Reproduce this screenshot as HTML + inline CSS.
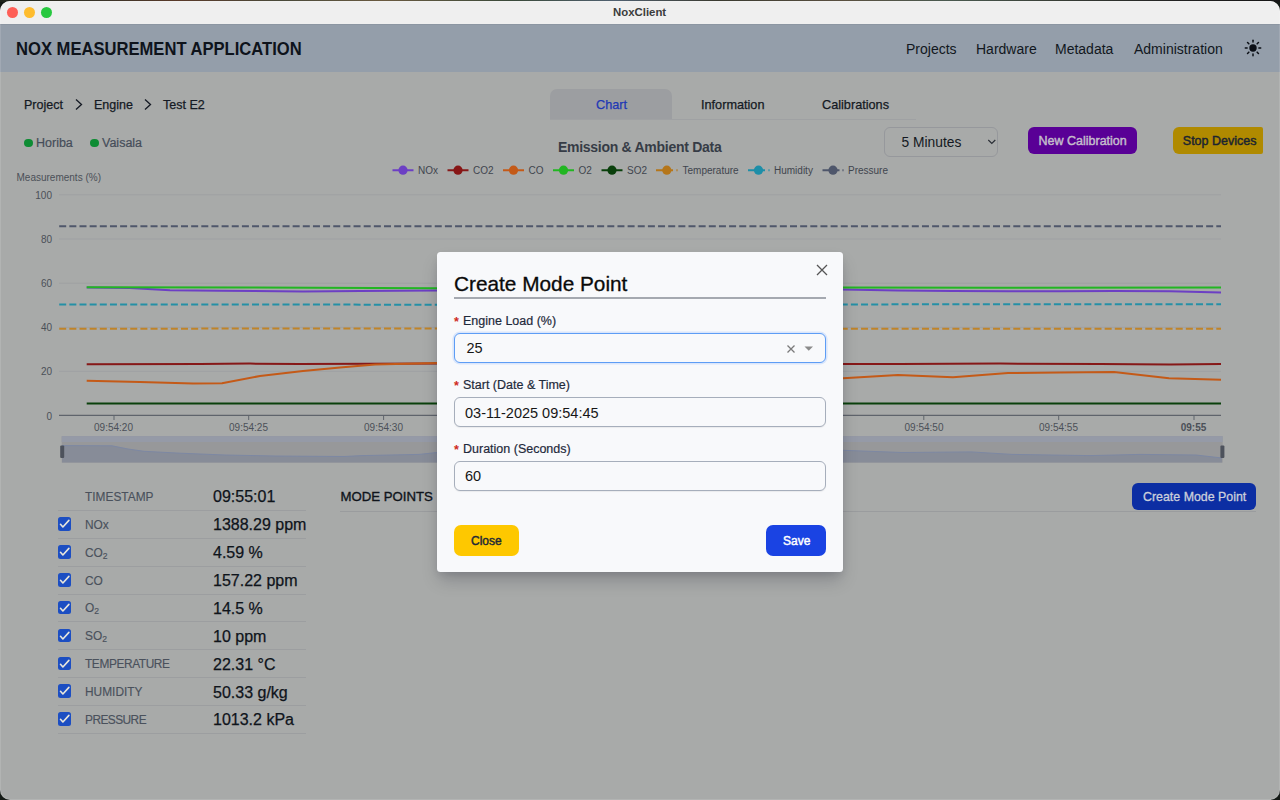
<!DOCTYPE html>
<html><head><meta charset="utf-8">
<style>
*{box-sizing:border-box;margin:0;padding:0}
html,body{width:1280px;height:800px;overflow:hidden;background:#141a16;font-family:"Liberation Sans",sans-serif}
.a{position:absolute;white-space:nowrap;line-height:1}
#win{position:absolute;left:0;top:1px;width:1280px;height:799px;border-radius:10px;overflow:hidden;background:#a8aaa9}
#wb{position:absolute;left:0;top:1px;width:1280px;height:799px;border-radius:10px;box-shadow:inset 0 0 0 1px rgba(255,255,255,0.12);pointer-events:none}
#tb{position:absolute;left:0;top:0;width:1280px;height:23px;background:#efefef}
.tl{position:absolute;top:6px;width:11px;height:11px;border-radius:50%}
#hdr{position:absolute;left:0;top:23px;width:1280px;height:48px;background:#949eaa}
.nav{font-size:14px;color:#111720;top:17.8px}
.bc{font-size:12.5px;color:#151a24;-webkit-text-stroke:0.25px #151a24}
.tab{font-size:12.7px;color:#141922;-webkit-text-stroke:0.25px #141922}
.lg{font-size:10px;color:#3f454e}
.yl{font-size:10px;color:#4b5058;text-align:right;width:30px}
.xl{font-size:10px;color:#4b5058;width:60px;text-align:center}
.tlab{font-size:11.9px;color:#4a515c;left:85px;-webkit-text-stroke:0.15px #4a515c}
.sub{font-size:0.72em;vertical-align:-0.25em}
.tval{font-size:16px;color:#0f141b;left:213px;-webkit-text-stroke:0.25px #0f141b}
.div{position:absolute;left:58px;width:248px;height:1px;background:#9c9ea0}
.cb{position:absolute;left:58px;width:13.2px;height:13.5px;border-radius:2.5px;background:#1c4ec2}
.cb svg{position:absolute;left:0;top:0}
#modal{position:absolute;left:437px;top:251px;width:406px;height:320.3px;background:#f8f9fb;border-radius:3.5px;box-shadow:0 10px 18px -2px rgba(10,10,30,0.2),0 4px 8px -2px rgba(10,10,30,0.12)}
.ml{font-size:12.5px;color:#1f2a3b;-webkit-text-stroke:0.2px #1f2a3b}
.req{color:#cf2a1f;font-size:12.5px;font-weight:700}
.inp{position:absolute;left:17px;width:372px;height:30px;border:1.25px solid #a6aebb;border-radius:6px;background:#f8f9fb;box-shadow:0 1px 1px rgba(0,0,0,0.06)}
.iv{font-size:14.5px;color:#161616}
</style></head><body>
<div class="a" style="left:0;top:0;width:1280px;height:2px;background:linear-gradient(90deg,#1e241c 0%,#3a3428 8%,#5a3a2a 14%,#4a4a3a 22%,#6a5a40 30%,#3a4a3a 40%,#506070 48%,#3a3a30 56%,#5a5040 66%,#4a5a50 74%,#3a4038 82%,#222 92%,#151515 100%)"></div>
<div id="win">
  <div id="tb">
    <div class="tl" style="left:6.5px;background:#fe5f57"></div>
    <div class="tl" style="left:23.5px;background:#febc2e"></div>
    <div class="tl" style="left:40.5px;background:#28c840"></div>
    <div class="a" style="left:613px;top:5.8px;font-size:11.4px;font-weight:700;color:#3c3c3c">NoxClient</div>
  </div>
  <div id="hdr"><div class="a" style="left:0;top:0;width:1280px;height:1px;background:#8c96a2"></div>
    <div class="a" style="left:15.8px;top:17.2px;font-size:17.5px;transform:scaleX(0.948);transform-origin:0 0;font-weight:700;color:#0e131b">NOX MEASUREMENT APPLICATION</div>
    <div class="a nav" style="left:906px">Projects</div>
    <div class="a nav" style="left:976px">Hardware</div>
    <div class="a nav" style="left:1055px">Metadata</div>
    <div class="a nav" style="left:1134px">Administration</div>
    <svg class="a" style="left:1243.7px;top:15.4px" width="18" height="18" viewBox="0 0 18 18">
      <circle cx="9" cy="9" r="3.7" fill="#0b0f16"/>
      <g stroke="#0b0f16" stroke-width="1.5" stroke-linecap="round"><line x1="14.90" y1="9.00" x2="16.70" y2="9.00"/><line x1="13.17" y1="13.17" x2="14.44" y2="14.44"/><line x1="9.00" y1="14.90" x2="9.00" y2="16.70"/><line x1="4.83" y1="13.17" x2="3.56" y2="14.44"/><line x1="3.10" y1="9.00" x2="1.30" y2="9.00"/><line x1="4.83" y1="4.83" x2="3.56" y2="3.56"/><line x1="9.00" y1="3.10" x2="9.00" y2="1.30"/><line x1="13.17" y1="4.83" x2="14.44" y2="3.56"/></g>
    </svg>
  </div>
  <!-- content coordinates: page y = win y + 1 -->
  <div style="position:absolute;left:0;top:-1px;width:1280px;height:800px">
    <!-- breadcrumb -->
    <div class="a bc" style="left:24px;top:98.5px">Project</div>
    <svg class="a" style="left:74px;top:98px" width="10" height="13"><path d="M2 1.5 L7.5 6.5 L2 11.5" fill="none" stroke="#151a24" stroke-width="1.3"/></svg>
    <div class="a bc" style="left:94px;top:98.5px">Engine</div>
    <svg class="a" style="left:143px;top:98px" width="10" height="13"><path d="M2 1.5 L7.5 6.5 L2 11.5" fill="none" stroke="#151a24" stroke-width="1.3"/></svg>
    <div class="a bc" style="left:163px;top:98.5px">Test E2</div>
    <!-- status -->
    <div class="a" style="left:24.2px;top:138.6px;width:8.6px;height:8.6px;border-radius:50%;background:#0e8c34"></div>
    <div class="a" style="left:36px;top:137px;font-size:12.5px;color:#454d59;-webkit-text-stroke:0.2px #454d59">Horiba</div>
    <div class="a" style="left:90.2px;top:138.6px;width:8.6px;height:8.6px;border-radius:50%;background:#0e8c34"></div>
    <div class="a" style="left:102px;top:137px;font-size:12.5px;color:#454d59;-webkit-text-stroke:0.2px #454d59">Vaisala</div>
    <!-- tabs -->
    <div class="a" style="left:550px;top:89px;width:122px;height:31px;background:#9c9ea1;border-radius:7px 7px 0 0"></div>
    <div class="a" style="left:550px;top:119px;width:366px;height:1px;background:#9fa1a3"></div>
    <div class="a tab" style="left:596px;top:99px;color:#1f38b5;-webkit-text-stroke:0.25px #1f38b5">Chart</div>
    <div class="a tab" style="left:701px;top:99px">Information</div>
    <div class="a tab" style="left:822px;top:99px">Calibrations</div>
    <!-- chart title -->
    <div class="a" style="left:558px;top:139.5px;font-size:14px;letter-spacing:-0.28px;font-weight:700;color:#363c46">Emission &amp; Ambient Data</div>
    <!-- select -->
    <div class="a" style="left:884px;top:127px;width:114px;height:30px;border:1px solid #96989c;border-radius:6px"></div>
    <div class="a" style="left:901.5px;top:136.3px;font-size:13.8px;color:#141922">5 Minutes</div>
    <svg class="a" style="left:987px;top:137.5px" width="10" height="8"><path d="M1.3 2 L4.8 5.5 L8.3 2" fill="none" stroke="#2a2f36" stroke-width="1.2"/></svg>
    <!-- buttons -->
    <div class="a" style="left:1028px;top:127px;width:109px;height:27px;background:#590096;border-radius:6px"></div>
    <div class="a" style="left:1038.5px;top:135.4px;font-size:12.5px;color:#c4bdcb;-webkit-text-stroke:0.45px #c4bdcb">New Calibration</div>
    <div class="a" style="left:1173px;top:127px;width:90px;height:27px;background:#b08a00;border-radius:6px 2px 2px 6px"></div>
    <div class="a" style="left:1182.8px;top:135.2px;font-size:12.5px;color:#1b2430;-webkit-text-stroke:0.45px #1b2430">Stop Devices</div>
    <!-- chart labels -->
    <div class="a" style="left:16.5px;top:173px;font-size:10px;color:#4b5058">Measurements (%)</div>
    <div class="a yl" style="left:22px;top:191px">100</div>
    <div class="a yl" style="left:22px;top:235px">80</div>
    <div class="a yl" style="left:22px;top:279px">60</div>
    <div class="a yl" style="left:22px;top:323px">40</div>
    <div class="a yl" style="left:22px;top:367px">20</div>
    <div class="a yl" style="left:22px;top:412px">0</div>
    <div class="a xl" style="left:83.5px;top:422.7px">09:54:20</div>
    <div class="a xl" style="left:218.5px;top:422.7px">09:54:25</div>
    <div class="a xl" style="left:353.5px;top:422.7px">09:54:30</div>
    <div class="a xl" style="left:894px;top:422.7px">09:54:50</div>
    <div class="a xl" style="left:1028.5px;top:422.7px">09:54:55</div>
    <div class="a xl" style="left:1163.5px;top:422.7px;font-weight:700">09:55</div>
    <!-- legend -->
    <div class="a lg" style="left:418px;top:166px">NOx</div>
    <div class="a lg" style="left:473px;top:166px">CO2</div>
    <div class="a lg" style="left:528.5px;top:166px">CO</div>
    <div class="a lg" style="left:578.5px;top:166px">O2</div>
    <div class="a lg" style="left:627px;top:166px">SO2</div>
    <div class="a lg" style="left:682.5px;top:166px">Temperature</div>
    <div class="a lg" style="left:774px;top:166px">Humidity</div>
    <div class="a lg" style="left:848px;top:166px">Pressure</div>
    <svg class="a" style="left:0;top:0" width="1280" height="800">
      <!-- legend icons -->
      <g stroke-width="2">
        <line x1="392.5" y1="170.2" x2="413.5" y2="170.2" stroke="#6c3fc4"/><circle cx="403" cy="170.2" r="4.6" fill="#6c3fc4"/>
        <line x1="447.5" y1="170.2" x2="468.5" y2="170.2" stroke="#861818"/><circle cx="458" cy="170.2" r="4.6" fill="#871616"/>
        <line x1="503" y1="170.2" x2="524" y2="170.2" stroke="#c45a18"/><circle cx="513.5" cy="170.2" r="4.6" fill="#c45a18"/>
        <line x1="553" y1="170.2" x2="574" y2="170.2" stroke="#22b622"/><circle cx="563.5" cy="170.2" r="4.6" fill="#22b622"/>
        <line x1="601.5" y1="170.2" x2="622.5" y2="170.2" stroke="#0a400c"/><circle cx="612" cy="170.2" r="4.6" fill="#0a400c"/>
        <line x1="656" y1="170.2" x2="673" y2="170.2" stroke="#b5761a"/><line x1="676" y1="170.2" x2="678" y2="170.2" stroke="#b5761a" opacity="0.55"/><circle cx="666.8" cy="170.2" r="4.6" fill="#b5761a"/>
        <line x1="748" y1="170.2" x2="765" y2="170.2" stroke="#1d8ea8"/><line x1="768" y1="170.2" x2="770" y2="170.2" stroke="#1d8ea8" opacity="0.55"/><circle cx="758.5" cy="170.2" r="4.6" fill="#1d8ea8"/>
        <line x1="822.5" y1="170.2" x2="839.5" y2="170.2" stroke="#4e566b"/><line x1="842" y1="170.2" x2="844" y2="170.2" stroke="#4e566b" opacity="0.55"/><circle cx="833" cy="170.2" r="4.6" fill="#4e566b"/>
      </g>
      <!-- grid -->
      <g stroke="#9ea0a3" stroke-width="1">
        <line x1="59" y1="194.8" x2="1221" y2="194.8"/>
        <line x1="59" y1="239" x2="1221" y2="239"/>
        <line x1="59" y1="283.2" x2="1221" y2="283.2"/>
        <line x1="59" y1="327.3" x2="1221" y2="327.3"/>
        <line x1="59" y1="371.3" x2="1221" y2="371.3"/>
      </g>
      <line x1="59" y1="415.3" x2="1221" y2="415.3" stroke="#5f646c" stroke-width="1.2"/>
      <g stroke="#5f646c" stroke-width="1">
        <line x1="114" y1="415" x2="114" y2="420"/><line x1="248.7" y1="415" x2="248.7" y2="420"/><line x1="383.6" y1="415" x2="383.6" y2="420"/>
        <line x1="923.8" y1="415" x2="923.8" y2="420"/><line x1="1058.7" y1="415" x2="1058.7" y2="420"/><line x1="1194" y1="415" x2="1194" y2="420"/>
      </g>
      <!-- dashed series -->
      <g stroke-width="2" fill="none" stroke-dasharray="7 3.15">
        <line x1="59.2" y1="226.3" x2="1221" y2="226.3" stroke="#4f576b"/>
        <path d="M59.2 304.6 L300 304.5 L437 304.8 L843 304.4 L1221 304.2" stroke="#2590a6"/>
        <path d="M59.2 328.7 L437 328.5 L843 328.8 L1221 328.7" stroke="#c08428"/>
      </g>
      <!-- solid series -->
      <g stroke-width="2" fill="none" stroke-linejoin="round">
        <path d="M86.7 403.6 L1221 403.6" stroke="#0a400c"/>
        <path d="M86.7 364.2 L200 364 L250 363.6 L300 364 L437 363.6 L843 363.9 L900 364.1 L1000 363.6 L1100 364 L1170 364.4 L1221 364" stroke="#861818"/>
        <path d="M86.7 380.8 L140 382 L193 383.4 L222 383.2 L260 376 L303 371 L340 367.5 L375 364.4 L437 363 M843 378.2 L898 375.1 L953 377.3 L1008 373 L1060 372.5 L1114 372 L1169 378.2 L1221 379.7" stroke="#c45a18"/>
        <path d="M86.7 287.6 L130 287.9 L170 290.2 L220 290.8 L303 291.5 L360 291.1 L437 290.6 M843 289.6 L898 290.6 L953 291 L1008 291.3 L1060 291.3 L1114 291 L1170 291.2 L1221 292.6" stroke="#6c3fc4"/>
        <path d="M86.7 287.2 L250 287.6 L437 288.2 M843 287.4 L1000 287.7 L1221 287.4" stroke="#22b622"/>
      </g>
      <!-- data zoom -->
      <rect x="61.7" y="436.2" width="1161" height="26.4" fill="#97989a"/>
      <rect x="61.7" y="436.2" width="1161" height="5.8" fill="#959aa7"/>
      <path d="M62 445.6 L112 445.8 L128 449 L144 451.3 L180 453.2 L225 455 L275 456 L344 456.5 L362 455.6 L419 454.4 L437 452.5 L500 452 L600 453 L700 452.5 L780 451.5 L843 450.3 L902 452.5 L971 451.9 L1012 454.4 L1090 455.6 L1140 454.4 L1196 455 L1222 458 L1222 462.6 L62 462.6 Z" fill="#878c98" stroke="none"/>
      <path d="M62 445.6 L112 445.8 L128 449 L144 451.3 L180 453.2 L225 455 L275 456 L344 456.5 L362 455.6 L419 454.4 L437 452.5 L500 452 L600 453 L700 452.5 L780 451.5 L843 450.3 L902 452.5 L971 451.9 L1012 454.4 L1090 455.6 L1140 454.4 L1196 455 L1222 458" fill="none" stroke="#7d88a3" stroke-width="1"/>
      <rect x="60.2" y="445.5" width="4" height="12.6" rx="1" fill="#4d525c"/>
      <rect x="1220.4" y="445.5" width="4" height="12.6" rx="1" fill="#4d525c"/>
    </svg>
    <!-- table -->
    <div class="a tlab" style="left:85px;top:491.6px">TIMESTAMP</div>
    <div class="a tval" style="top:489px">09:55:01</div>
    <div class="div" style="top:510.00px"></div>
    <div class="div" style="top:537.86px"></div>
    <div class="div" style="top:565.72px"></div>
    <div class="div" style="top:593.58px"></div>
    <div class="div" style="top:621.44px"></div>
    <div class="div" style="top:649.30px"></div>
    <div class="div" style="top:677.16px"></div>
    <div class="div" style="top:705.02px"></div>
    <div class="div" style="top:732.88px"></div>
    <div class="cb" style="top:517.30px"><svg width="13.5" height="13.5"><path d="M2.5 7.3 L4.9 10 L10.9 3.4" fill="none" stroke="#e8e6dc" stroke-width="1.6" stroke-linecap="round" stroke-linejoin="round"/></svg></div>
    <div class="a tlab" style="top:519.80px">NOx</div>
    <div class="a tval" style="top:517.40px">1388.29 ppm</div>
    <div class="cb" style="top:545.16px"><svg width="13.5" height="13.5"><path d="M2.5 7.3 L4.9 10 L10.9 3.4" fill="none" stroke="#e8e6dc" stroke-width="1.6" stroke-linecap="round" stroke-linejoin="round"/></svg></div>
    <div class="a tlab" style="top:547.66px">CO<span class='sub'>2</span></div>
    <div class="a tval" style="top:545.26px">4.59 %</div>
    <div class="cb" style="top:573.02px"><svg width="13.5" height="13.5"><path d="M2.5 7.3 L4.9 10 L10.9 3.4" fill="none" stroke="#e8e6dc" stroke-width="1.6" stroke-linecap="round" stroke-linejoin="round"/></svg></div>
    <div class="a tlab" style="top:575.52px">CO</div>
    <div class="a tval" style="top:573.12px">157.22 ppm</div>
    <div class="cb" style="top:600.88px"><svg width="13.5" height="13.5"><path d="M2.5 7.3 L4.9 10 L10.9 3.4" fill="none" stroke="#e8e6dc" stroke-width="1.6" stroke-linecap="round" stroke-linejoin="round"/></svg></div>
    <div class="a tlab" style="top:603.38px">O<span class='sub'>2</span></div>
    <div class="a tval" style="top:600.98px">14.5 %</div>
    <div class="cb" style="top:628.74px"><svg width="13.5" height="13.5"><path d="M2.5 7.3 L4.9 10 L10.9 3.4" fill="none" stroke="#e8e6dc" stroke-width="1.6" stroke-linecap="round" stroke-linejoin="round"/></svg></div>
    <div class="a tlab" style="top:631.24px">SO<span class='sub'>2</span></div>
    <div class="a tval" style="top:628.84px">10 ppm</div>
    <div class="cb" style="top:656.60px"><svg width="13.5" height="13.5"><path d="M2.5 7.3 L4.9 10 L10.9 3.4" fill="none" stroke="#e8e6dc" stroke-width="1.6" stroke-linecap="round" stroke-linejoin="round"/></svg></div>
    <div class="a tlab" style="top:659.10px;letter-spacing:-0.4px">TEMPERATURE</div>
    <div class="a tval" style="top:656.70px">22.31 °C</div>
    <div class="cb" style="top:684.46px"><svg width="13.5" height="13.5"><path d="M2.5 7.3 L4.9 10 L10.9 3.4" fill="none" stroke="#e8e6dc" stroke-width="1.6" stroke-linecap="round" stroke-linejoin="round"/></svg></div>
    <div class="a tlab" style="top:686.96px">HUMIDITY</div>
    <div class="a tval" style="top:684.56px">50.33 g/kg</div>
    <div class="cb" style="top:712.32px"><svg width="13.5" height="13.5"><path d="M2.5 7.3 L4.9 10 L10.9 3.4" fill="none" stroke="#e8e6dc" stroke-width="1.6" stroke-linecap="round" stroke-linejoin="round"/></svg></div>
    <div class="a tlab" style="top:714.82px;letter-spacing:-0.55px">PRESSURE</div>
    <div class="a tval" style="top:712.42px">1013.2 kPa</div>
    <!-- mode points -->
    <div class="a" style="left:340.5px;top:490px;font-size:13.2px;color:#0f141b;-webkit-text-stroke:0.35px #0f141b">MODE POINTS</div>
    <div class="a" style="left:340px;top:511px;width:916px;height:1px;background:#9a9c9e"></div>
    <div class="a" style="left:1132px;top:483px;width:124px;height:27px;background:#0c2ea3;border-radius:6px"></div>
    <div class="a" style="left:1143px;top:490.5px;font-size:12.4px;color:#cbcfdb;-webkit-text-stroke:0.3px #cbcfdb">Create Mode Point</div>
  </div>
  <div id="modal" style="top:251px">
    <div class="a" style="left:17px;top:21.5px;font-size:20.8px;color:#0a0a0a;-webkit-text-stroke:0.3px #0a0a0a">Create Mode Point</div>
    <div class="a" style="left:17px;top:44.9px;width:372px;height:1.9px;background:#a5a9b0"></div>
    <svg class="a" style="left:379px;top:12px" width="12" height="12"><path d="M1 1 L11 11 M11 1 L1 11" stroke="#555" stroke-width="1.3" fill="none"/></svg>
    <div class="a req" style="left:17px;top:64px">*</div>
    <div class="a ml" style="left:26px;top:63px">Engine Load (%)</div>
    <div class="inp" style="top:80.5px;border:1.5px solid #5d9df5;box-shadow:0 0 0 1.6px #dae6fb"></div>
    <div class="a iv" style="left:29.5px;top:89px">25</div>
    <svg class="a" style="left:349px;top:92px" width="10" height="10"><path d="M1.5 1.5 L8.5 8.5 M8.5 1.5 L1.5 8.5" stroke="#7a7a7a" stroke-width="1.3" fill="none"/></svg>
    <svg class="a" style="left:367px;top:94px" width="10" height="6"><path d="M0.5 0.5 L9 0.5 L4.75 4.8 Z" fill="#8a8a8a"/></svg>
    <div class="a req" style="left:17px;top:128px">*</div>
    <div class="a ml" style="left:26px;top:127px">Start (Date &amp; Time)</div>
    <div class="inp" style="top:145px"></div>
    <div class="a iv" style="left:28px;top:153.5px">03-11-2025 09:54:45</div>
    <div class="a req" style="left:17px;top:192px">*</div>
    <div class="a ml" style="left:26px;top:191px">Duration (Seconds)</div>
    <div class="inp" style="top:209.3px"></div>
    <div class="a iv" style="left:28px;top:217.4px">60</div>
    <div class="a" style="left:17px;top:273.2px;width:65px;height:30.5px;background:#fec800;border-radius:7px"></div>
    <div class="a" style="left:34px;top:282.8px;font-size:12px;color:#1e2937;-webkit-text-stroke:0.45px #1e2937">Close</div>
    <div class="a" style="left:329px;top:273.2px;width:60px;height:30.5px;background:#1a43e3;border-radius:7px"></div>
    <div class="a" style="left:346px;top:282.8px;font-size:12px;color:#ffffff;-webkit-text-stroke:0.45px #ffffff">Save</div>
  </div>
</div>
<div id="wb"></div>
</body></html>
